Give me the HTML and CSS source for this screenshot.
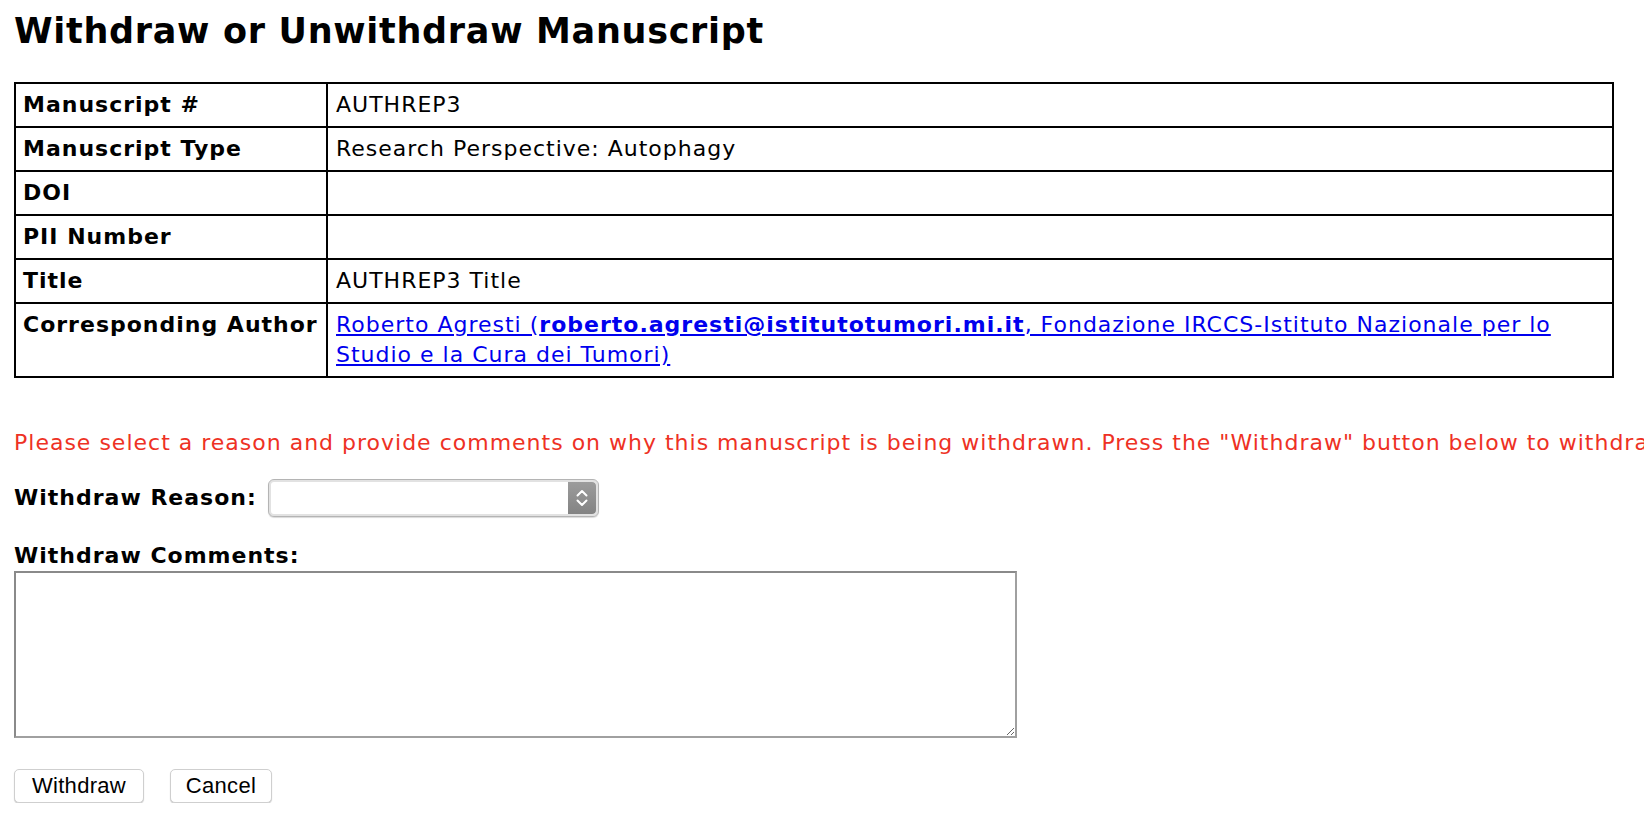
FILE: index.html
```html
<!DOCTYPE html>
<html>
<head>
<meta charset="utf-8">
<title>Withdraw or Unwithdraw Manuscript</title>
<link rel="stylesheet" href="styles.css">
</head>
<body>
<div class="page">
  <h1 class="title">Withdraw or Unwithdraw Manuscript</h1>
  <table class="info">
    <tr><td class="lbl">Manuscript #</td><td class="val">AUTHREP3</td></tr>
    <tr><td class="lbl">Manuscript Type</td><td class="val">Research Perspective: Autophagy</td></tr>
    <tr><td class="lbl">DOI</td><td class="val"></td></tr>
    <tr><td class="lbl">PII Number</td><td class="val"></td></tr>
    <tr><td class="lbl">Title</td><td class="val">AUTHREP3 Title</td></tr>
    <tr><td class="lbl">Corresponding Author</td><td class="val"><a href="#" class="author">Roberto Agresti (<b>roberto.agresti@istitutotumori.mi.it</b>, Fondazione IRCCS-Istituto Nazionale per lo Studio e la Cura dei Tumori)</a></td></tr>
  </table>
  <p class="notice">Please select a reason and provide comments on why this manuscript is being withdrawn. Press the "Withdraw" button below to withdraw the manuscript.</p>
  <div class="reason-row">
    <label class="field-label" for="reason">Withdraw Reason:</label>
    <div class="select-wrap">
      <select id="reason" class="select"><option></option></select>
      <span class="select-arrow">
        <svg width="16" height="24" viewBox="0 0 16 24"><path d="M3.5 9.5 L8 5 L12.5 9.5" fill="none" stroke="#fff" stroke-width="2" stroke-linecap="round" stroke-linejoin="round"/><path d="M3.5 14.5 L8 19 L12.5 14.5" fill="none" stroke="#fff" stroke-width="2" stroke-linecap="round" stroke-linejoin="round"/></svg>
      </span>
    </div>
  </div>
  <label class="field-label comments-label" for="comments">Withdraw Comments:</label>
  <textarea id="comments" class="comments"></textarea>
  <div class="buttons">
    <button class="btn btn-withdraw">Withdraw</button>
    <button class="btn btn-cancel">Cancel</button>
  </div>
</div>
</body>
</html>
```
FILE: styles.css
```css
html, body {
  margin: 0;
  padding: 0;
  background: #fff;
  overflow: hidden;
}
.page {
  padding: 0 14px;
  font-family: "DejaVu Sans", Verdana, sans-serif;
  font-size: 22px;
  letter-spacing: 1px;
  color: #000;
}
.title {
  font-size: 35px;
  font-weight: bold;
  letter-spacing: 0.7px;
  line-height: 42px;
  margin: 10px 0 30px;
}
.info {
  width: 1600px;
  border-collapse: separate;
  border-spacing: 0;
  border: 1px solid #000;
}
.info td {
  border: 1px solid #000;
  padding: 6px 7px;
  line-height: 30px;
  vertical-align: top;
  height: 30px;
}
.info td.val {
  padding-left: 8px;
}
.info td.lbl {
  font-weight: bold;
  width: 299px;
  white-space: nowrap;
  padding-right: 4px;
}
.author {
  color: #0000ee;
  text-decoration: underline;
}
.notice {
  color: #ee3124;
  white-space: nowrap;
  margin: 50px 0 0;
  line-height: 30px;
}
.reason-row {
  display: flex;
  align-items: center;
  gap: 11px;
  margin-top: 21px;
}
.field-label {
  font-weight: bold;
  line-height: 30px;
}
.select-wrap {
  position: relative;
  width: 331px;
  height: 38px;
}
.select {
  appearance: none;
  -webkit-appearance: none;
  box-sizing: border-box;
  width: 100%;
  height: 100%;
  border: 1px solid #b4b4b4;
  border-radius: 6px;
  background: #fff;
  box-shadow: inset 0 0 0 2px #e2e2e2, 0 1px 1px rgba(0,0,0,0.15);
  font-family: "Liberation Sans", Arial, sans-serif;
  font-size: 18px;
}
.select-arrow {
  position: absolute;
  top: 3px;
  right: 3px;
  bottom: 3px;
  width: 28px;
  border-radius: 0 4px 4px 0;
  background: linear-gradient(#9c9c9c, #838383);
  display: flex;
  align-items: center;
  justify-content: center;
}
.comments-label {
  display: block;
  margin-top: 24px;
}
.comments {
  display: block;
  box-sizing: border-box;
  width: 1003px;
  height: 167px;
  margin: 0;
  border: 2px solid #8a8a8a;
  border-right-color: #a0a0a0;
  border-bottom-color: #a0a0a0;
  background: #fff;
  font-family: "DejaVu Sans", Verdana, sans-serif;
  font-size: 18px;
}
.buttons {
  display: flex;
  gap: 26px;
  margin-top: 31px;
}
.btn {
  height: 34px;
  padding: 0 10px;
  background: #fff;
  border: 1px solid #cfcfcf;
  border-radius: 5px;
  box-shadow: 0 1px 1px rgba(0,0,0,0.2);
  font-family: "Liberation Sans", Arial, sans-serif;
  font-size: 22px;
  letter-spacing: 0.3px;
  color: #000;
}
.btn-withdraw {
  width: 130px;
}
.btn-cancel {
  width: 102px;
}
```
